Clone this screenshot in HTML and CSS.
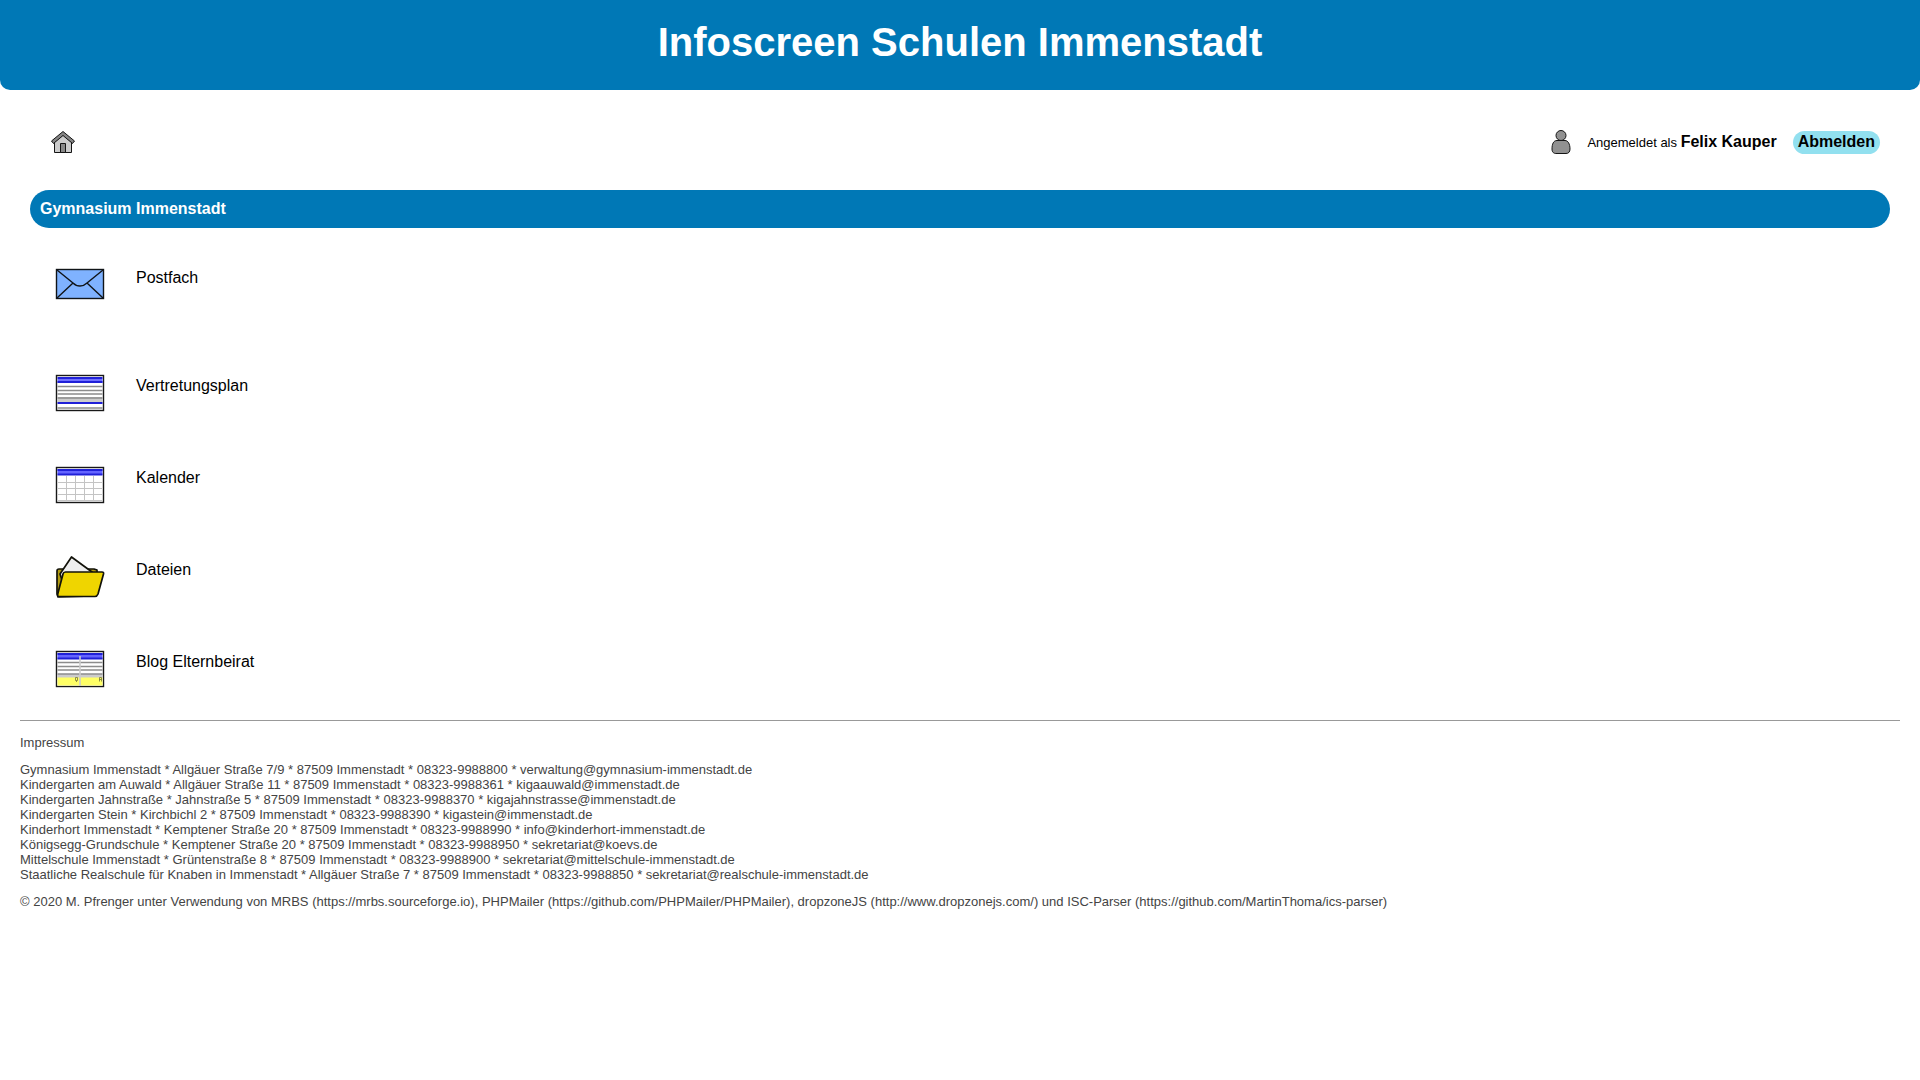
FILE: index.html
```html
<!DOCTYPE html>
<html lang="de">
<head>
<meta charset="utf-8">
<meta name="viewport" content="width=device-width, initial-scale=1">
<title>Infoscreen Schulen Immenstadt</title>
<link rel="stylesheet" href="styles.css">
</head>
<body>
<header class="banner">
  <h1 class="banner-title">Infoscreen Schulen Immenstadt</h1>
</header>

<nav class="toolbar">
  <a class="home" href="#" aria-label="Startseite">
    <svg width="26" height="24" viewBox="0 0 26 24" stroke="#151515" stroke-linejoin="round">
      <path d="M4.500 12V22.500H21.500V12L13 5Z" fill="#ccc"/>
      <path d="M10.500 22.500V13.500H15.500V22.500Z" fill="#888"/>
      <path d="M13 1.500L24.500 11L22.500 13.500L13 5.500L3.500 13.500L1.500 11Z" fill="#858585"/>
    </svg>
  </a>
  <div class="session">
    <svg width="20" height="26" viewBox="0 0 20 26" fill="#919191" stroke="#151515">
      <path d="M6 11.500C2.500 11.500 1 15 1 20C1 23.500 3 24.500 5 24.500H15C17.500 24.500 19 23 19 20C19 15 17 11.500 14 11.500Z"/>
      <circle cx="10" cy="6.500" r="5"/>
    </svg>
    <p class="user">Angemeldet als <strong class="user-name">Felix Kauper</strong></p>
    <button class="logout" type="button">Abmelden</button>
  </div>
</nav>

<main>
  <h2 class="school">Gymnasium Immenstadt</h2>
  <ul class="menu">
    <li class="menu-item menu-item-tall">
      <a class="menu-link" href="#">
        <svg width="50" height="50" viewBox="0 0 50 50" fill="none" stroke="#101418" stroke-width="1.400">
          <rect x="1.500" y="10.500" width="47" height="29" fill="#7fb2ff"/>
          <path d="M2 11L18 24C22 28 28 28 32 24L48 11M2 39L18 24M48 39L32 24"/>
        </svg>
        <span class="menu-label">Postfach</span>
      </a>
    </li>
    <li class="menu-item">
      <a class="menu-link" href="#">
        <svg width="50" height="50" viewBox="0 0 50 50">
          <rect x="1.500" y="8.500" width="47" height="35" fill="#fff" stroke="#181818" stroke-width="1.400"/>
          <path d="M2.500 12H47.500V16H2.500Z" fill="#7070ff"/>
          <path d="M2.500 30H47.500V35H2.500Z" fill="#ccc"/>
          <path d="M2.500 11H47.500M2.500 15H47.500M2.500 36H47.500" stroke="#2020d8" stroke-width="2"/>
          <path d="M2.500 19.500H47.500M2.500 23.500H47.500M2.500 27H47.500M2.500 31H47.500M2.500 41H47.500" stroke="#8c8c8c" stroke-width="1.500"/>
        </svg>
        <span class="menu-label">Vertretungsplan</span>
      </a>
    </li>
    <li class="menu-item">
      <a class="menu-link" href="#">
        <svg width="50" height="50" viewBox="0 0 50 50">
          <rect x="1.500" y="8.500" width="47" height="35" fill="#fff" stroke="#181818" stroke-width="1.400"/>
          <path d="M2.500 10H47.500V16H2.500Z" fill="#6464ff"/>
          <path d="M2.500 11H47.500M2.500 15.500H47.500" stroke="#2020d8" stroke-width="2"/>
          <path d="M11.500 17V42M20.500 17V42M29.500 17V42M38.500 17V42M3 23.500H47M3 29.500H47M3 35.500H47M3 41.500H47" stroke="#c4c4c4"/>
        </svg>
        <span class="menu-label">Kalender</span>
      </a>
    </li>
    <li class="menu-item">
      <a class="menu-link" href="#">
        <svg width="50" height="50" viewBox="0 0 50 50" stroke="#12120a" stroke-width="1.700" stroke-linejoin="round">
          <path d="M3 46L2 43V20Q2 18 4 18H39L42 19V22L38 45Z" fill="#b29b10"/>
          <path d="M5 23L16.500 6L37 21L30 32H8Z" fill="#eee"/>
          <path d="M10.500 21H47Q49 21 48.500 23L43 43Q42 45.500 40 45.500H4Q2 45.500 3 42L8 23Q8.500 21 10.500 21Z" fill="#efd500"/>
        </svg>
        <span class="menu-label">Dateien</span>
      </a>
    </li>
    <li class="menu-item">
      <a class="menu-link" href="#">
        <svg width="50" height="50" viewBox="0 0 50 50">
          <rect x="1.500" y="8.500" width="47" height="35" fill="#fff" stroke="#181818" stroke-width="1.400"/>
          <path d="M2.500 10H47.500V16H2.500Z" fill="#6464ff"/>
          <path d="M2.500 31H47.500V35H2.500Z" fill="#ccc"/>
          <path d="M2.500 34.500H47.500V42.500H2.500Z" fill="#ffff65"/>
          <path d="M2.500 11H47.500M2.500 15.500H47.500" stroke="#2020d8" stroke-width="2"/>
          <path d="M2.500 19.500H47.500M2.500 23.500H47.500M2.500 27H47.500M2.500 31H47.500" stroke="#8c8c8c" stroke-width="1.500"/>
          <path d="M25 13V43" stroke="#ccc" stroke-width="1.600"/>
          <path d="M20.500 34.500H22.500V37.500H20.500ZM21.500 38V39M44.500 38.500V34.500H46.500V38.500M44.500 36.500H46.500" fill="none" stroke="#74743a" stroke-width=".8"/>
        </svg>
        <span class="menu-label">Blog Elternbeirat</span>
      </a>
    </li>
  </ul>
</main>

<footer class="imprint">
  <p>Impressum</p>
  <p>Gymnasium Immenstadt * Allgäuer Straße 7/9 * 87509 Immenstadt * 08323-9988800 * verwaltung@gymnasium-immenstadt.de<br>
  Kindergarten am Auwald * Allgäuer Straße 11 * 87509 Immenstadt * 08323-9988361 * kigaauwald@immenstadt.de<br>
  Kindergarten Jahnstraße * Jahnstraße 5 * 87509 Immenstadt * 08323-9988370 * kigajahnstrasse@immenstadt.de<br>
  Kindergarten Stein * Kirchbichl 2 * 87509 Immenstadt * 08323-9988390 * kigastein@immenstadt.de<br>
  Kinderhort Immenstadt * Kemptener Straße 20 * 87509 Immenstadt * 08323-9988990 * info@kinderhort-immenstadt.de<br>
  Königsegg-Grundschule * Kemptener Straße 20 * 87509 Immenstadt * 08323-9988950 * sekretariat@koevs.de<br>
  Mittelschule Immenstadt * Grüntenstraße 8 * 87509 Immenstadt * 08323-9988900 * sekretariat@mittelschule-immenstadt.de<br>
  Staatliche Realschule für Knaben in Immenstadt * Allgäuer Straße 7 * 87509 Immenstadt * 08323-9988850 * sekretariat@realschule-immenstadt.de</p>
  <p>© 2020 M. Pfrenger unter Verwendung von MRBS (https://mrbs.sourceforge.io), PHPMailer (https://github.com/PHPMailer/PHPMailer), dropzoneJS (http://www.dropzonejs.com/) und ISC-Parser (https://github.com/MartinThoma/ics-parser)</p>
</footer>
</body>
</html>
```
FILE: styles.css
```css
* {
  box-sizing: border-box;
}

body {
  margin: 0;
  background: #fff;
  color: #000;
  font: 16px/18px "Liberation Sans", Arial, sans-serif;
}

h1, h2, p, ul {
  margin: 0;
  padding: 0;
}

svg {
  display: block;
  flex: none;
}

a {
  color: inherit;
  text-decoration: none;
}

.banner {
  padding: 19px 20px 25px;
  border-radius: 0 0 10px 10px;
  background: #0078b6;
  color: #fff;
  text-align: center;
}

.banner-title {
  font-size: 40px;
  line-height: 46px;
}

.toolbar {
  display: flex;
  justify-content: space-between;
  align-items: center;
  padding: 39px 40px 35px 50px;
}

.session {
  display: flex;
  align-items: center;
  gap: 16px;
}

.user {
  font-size: 13px;
}

.user-name {
  font-size: 16px;
}

.logout {
  padding: 2px 5px 3px;
  border: 0;
  border-radius: 12px;
  background: #92e0ef;
  color: #000;
  font: bold 16px/18px "Liberation Sans", Arial, sans-serif;
  cursor: pointer;
}

.school {
  margin: 0 30px;
  padding: 10px;
  border-radius: 19px;
  background: #0078b6;
  color: #fff;
  font-size: 16px;
  line-height: 18px;
}

.menu {
  padding: 31px 55px 27px;
  list-style: none;
}

.menu-item {
  display: flex;
  margin-bottom: 42px;
}

.menu-item-tall {
  margin-bottom: 58px;
}

.menu-item:last-child {
  margin-bottom: 0;
}

.menu-link {
  display: flex;
  gap: 31px;
}

.menu-label {
  padding-top: 10px;
}

.imprint {
  margin: 0 20px;
  padding: 14px 0;
  border-top: 1px solid #999;
  color: #444;
  font-size: 13px;
  line-height: 15px;
}

.imprint p {
  margin-bottom: 12px;
}
```
